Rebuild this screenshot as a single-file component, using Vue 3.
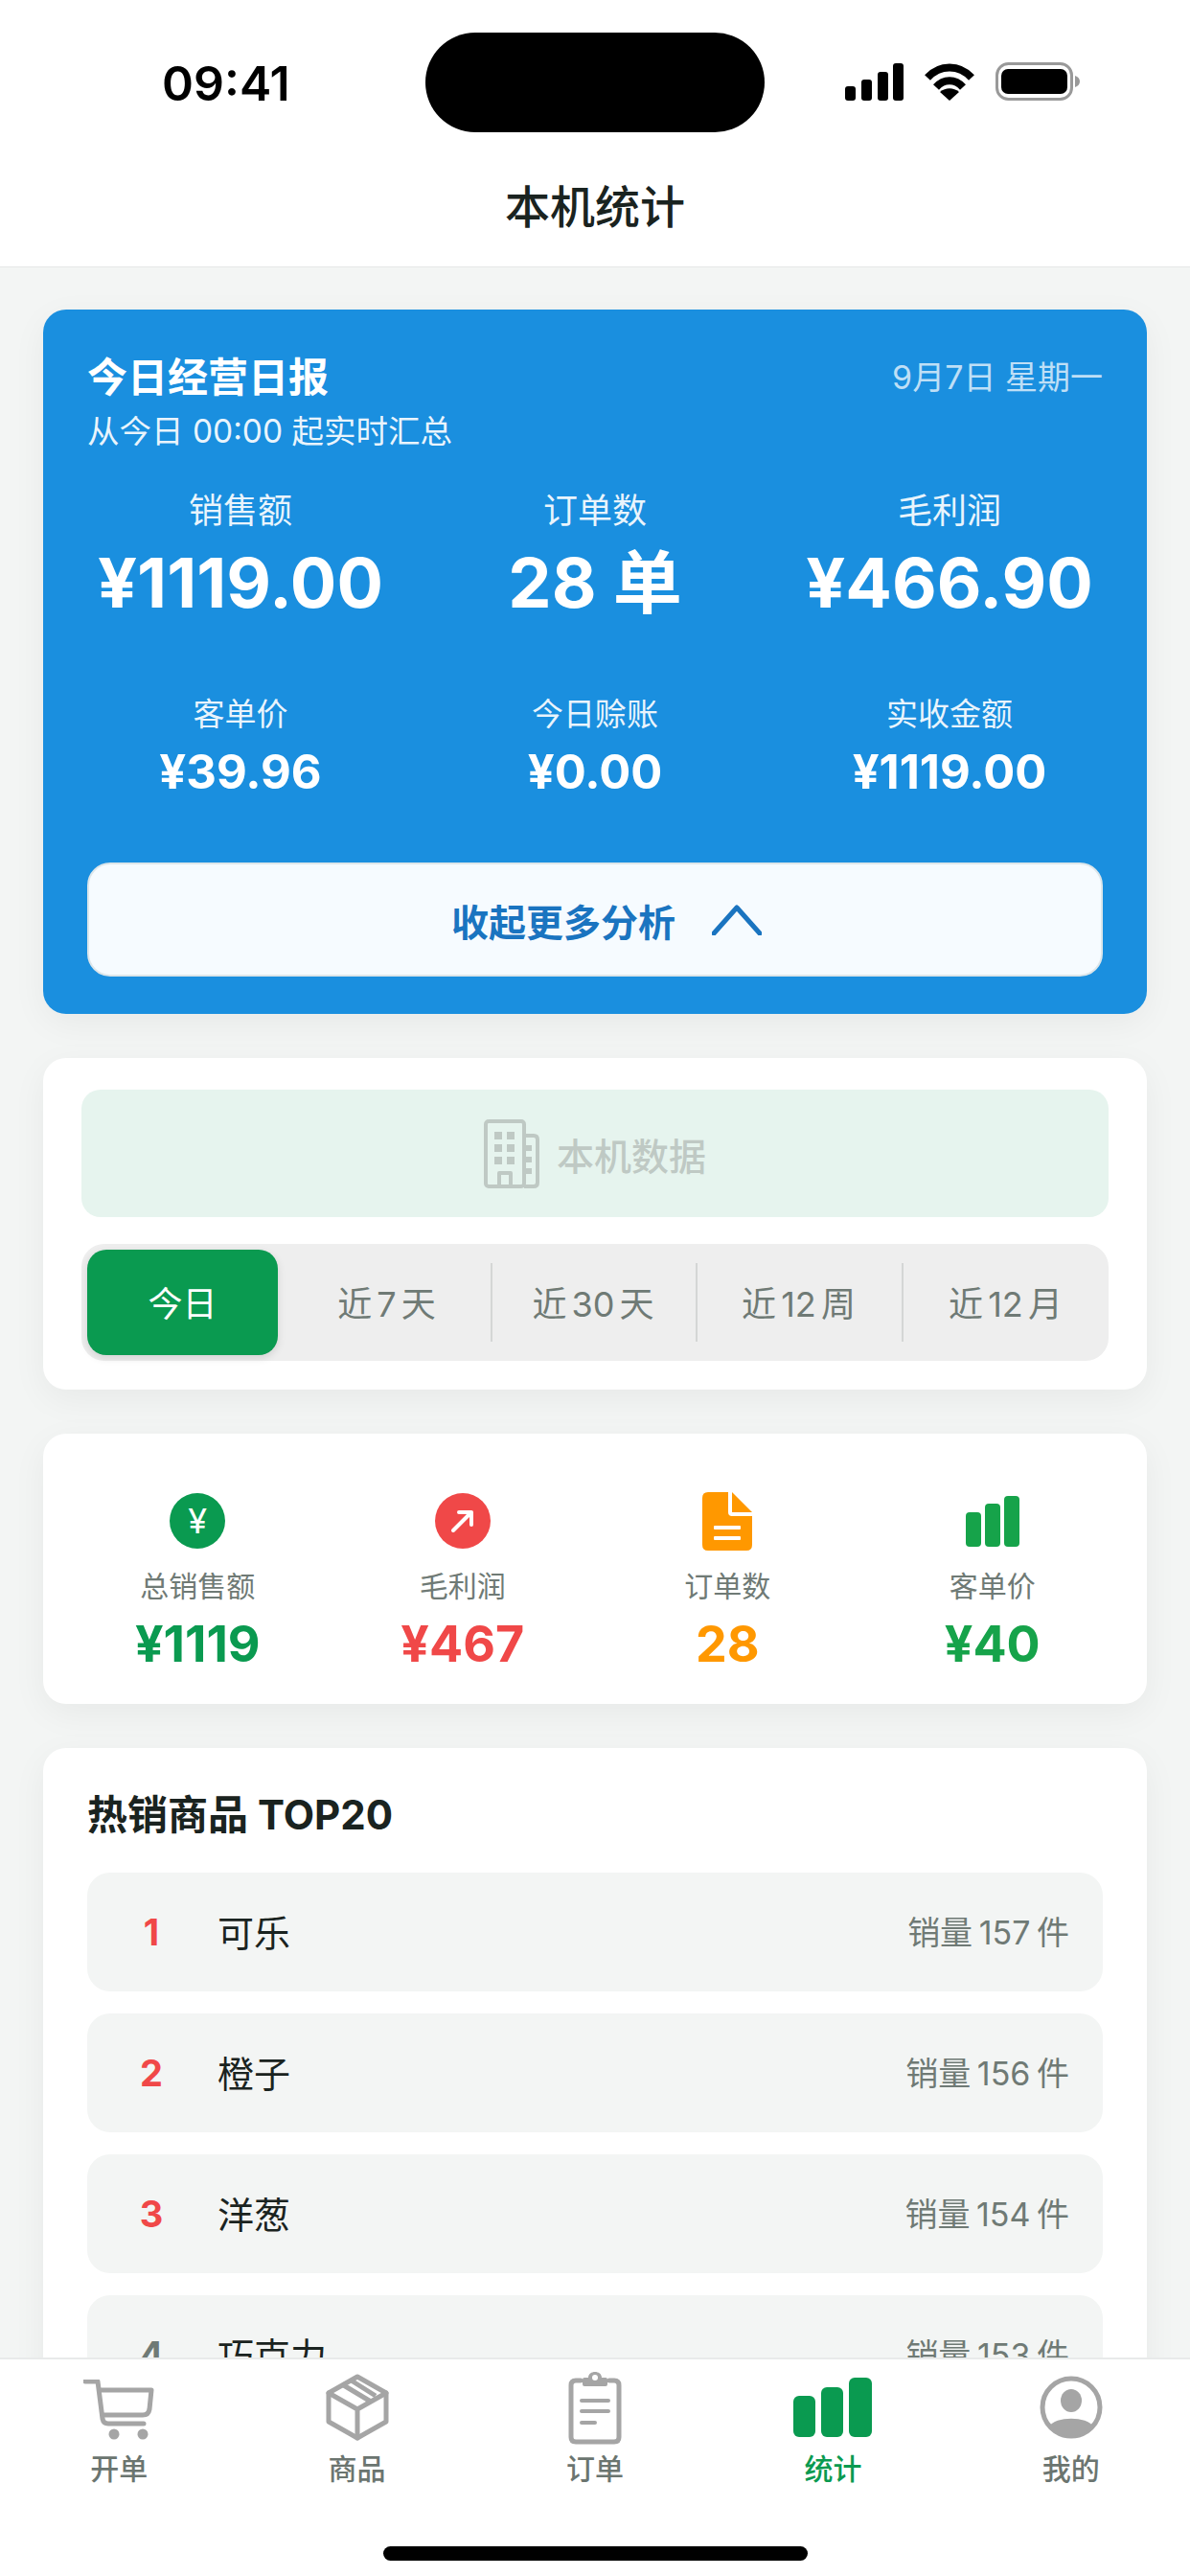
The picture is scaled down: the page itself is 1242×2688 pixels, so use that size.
<script setup>
const primary = [
  { label: '销售额', value: '¥1119.00' },
  { label: '订单数', value: '28 单' },
  { label: '毛利润', value: '¥466.90' },
]
const secondary = [
  { label: '客单价', value: '¥39.96' },
  { label: '今日赊账', value: '¥0.00' },
  { label: '实收金额', value: '¥1119.00' },
]
const ranges = ['今日', '近 7 天', '近 30 天', '近 12 周', '近 12 月']
const goods = [
  { rank: 1, name: '可乐', sold: '销量 157 件' },
  { rank: 2, name: '橙子', sold: '销量 156 件' },
  { rank: 3, name: '洋葱', sold: '销量 154 件' },
  { rank: 4, name: '巧克力', sold: '销量 153 件' },
]
</script>

<template>
  <div class="page">
    <header class="header">
      <div class="status">
        <span class="time">09:41</span>
        <div class="island"></div>
        <div class="status-icons">
          <svg class="signal" width="61" height="39" viewBox="0 0 61 39" fill="#000">
            <rect x="0" y="24" width="11" height="15" rx="3" />
            <rect x="17" y="17" width="11" height="22" rx="3" />
            <rect x="34" y="9" width="11" height="30" rx="3" />
            <rect x="50" y="0" width="11" height="39" rx="3" />
          </svg>
          <svg class="wifi" width="54" height="40" viewBox="0 0 54 40">
            <path d="M4 16 C17 2 37 2 50 16" fill="none" stroke="#000" stroke-width="8" />
            <path d="M13 26 C21 17 33 17 41 26" fill="none" stroke="#000" stroke-width="8" />
            <path d="M17 31 C23 26 31 26 37 31 L27 40 Z" fill="#000" />
          </svg>
          <svg class="battery" width="88" height="40" viewBox="0 0 88 40">
            <rect x="1.5" y="1.5" width="78" height="37" rx="12" fill="none" stroke="#999" stroke-width="3" />
            <rect x="6" y="7" width="69" height="26" rx="7" fill="#000" />
            <path d="M83 14 C86 15 88 17 88 20 C88 23 86 25 83 26 Z" fill="#999" />
          </svg>
        </div>
      </div>
      <h1 class="nav-title">本机统计</h1>
    </header>

    <main class="content">
      <section class="report">
        <div class="report-head">
          <div>
            <div class="report-title">今日经营日报</div>
            <div class="report-sub">从今日 00:00 起实时汇总</div>
          </div>
          <div class="report-date">9月7日 星期一</div>
        </div>
        <div class="metrics primary">
          <div v-for="m in primary" :key="m.label" class="metric">
            <div class="metric-label">{{ m.label }}</div>
            <div class="metric-value">{{ m.value }}</div>
          </div>
        </div>
        <div class="metrics secondary">
          <div v-for="m in secondary" :key="m.label" class="metric">
            <div class="metric-label">{{ m.label }}</div>
            <div class="metric-value">{{ m.value }}</div>
          </div>
        </div>
        <button class="collapse">
          <span>收起更多分析</span>
          <svg width="52" height="32" viewBox="0 0 52 32" fill="none" stroke="#1a74c0" stroke-width="5" stroke-linecap="round" stroke-linejoin="round">
            <path d="M2 30 L26 3 L50 30" />
          </svg>
        </button>
      </section>

      <section class="card filter">
        <div class="source">
          <svg width="58" height="72" viewBox="0 0 58 72" fill="none" stroke="#bfc9c4" stroke-width="4" stroke-linejoin="round">
            <rect x="2" y="2" width="40" height="68" rx="3" />
            <path d="M42 17 H52 Q56 17 56 21 V66 Q56 70 52 70 H42" />
            <path d="M16 70 V56 H28 V70" />
            <g fill="#bfc9c4" stroke="none">
              <rect x="11" y="13" width="8" height="8" /><rect x="24" y="13" width="8" height="8" />
              <rect x="11" y="26" width="8" height="8" /><rect x="24" y="26" width="8" height="8" />
              <rect x="11" y="39" width="8" height="8" /><rect x="24" y="39" width="8" height="8" />
              <rect x="44" y="27" width="6" height="6" /><rect x="44" y="39" width="6" height="6" /><rect x="44" y="51" width="6" height="6" />
            </g>
          </svg>
          <span>本机数据</span>
        </div>
        <div class="segments">
          <div v-for="(r, i) in ranges" :key="r" class="segment" :class="{ active: i === 0 }">{{ r }}</div>
        </div>
      </section>

      <section class="card stats">
        <div class="stat">
          <div class="stat-icon"><span class="dot green">¥</span></div>
          <div class="stat-label">总销售额</div>
          <div class="stat-value c-green">¥1119</div>
        </div>
        <div class="stat">
          <div class="stat-icon">
            <span class="dot red">
              <svg width="28" height="28" viewBox="0 0 28 28" fill="none" stroke="#fff" stroke-width="4" stroke-linecap="round" stroke-linejoin="round">
                <path d="M4 24 L23 5 M10 5 H23 V18" />
              </svg>
            </span>
          </div>
          <div class="stat-label">毛利润</div>
          <div class="stat-value c-red">¥467</div>
        </div>
        <div class="stat">
          <div class="stat-icon">
            <svg width="52" height="61" viewBox="0 0 52 61">
              <path d="M6 0 H27 V21 Q27 25 31 25 H52 V55 Q52 61 46 61 H6 Q0 61 0 55 V6 Q0 0 6 0 Z" fill="#ff9800" />
              <path d="M31 0 L52 21 H31 Z" fill="#ff9800" />
              <rect x="12" y="35" width="28" height="4" rx="1" fill="#fff" />
              <rect x="12" y="46" width="28" height="4" rx="1" fill="#fff" />
            </svg>
          </div>
          <div class="stat-label">订单数</div>
          <div class="stat-value c-orange">28</div>
        </div>
        <div class="stat">
          <div class="stat-icon">
            <svg width="56" height="53" viewBox="0 0 56 53" fill="#16a34a">
              <rect x="0" y="17" width="16" height="36" rx="4" />
              <rect x="20" y="8" width="16" height="45" rx="4" />
              <rect x="40" y="0" width="16" height="53" rx="4" />
            </svg>
          </div>
          <div class="stat-label">客单价</div>
          <div class="stat-value c-lime">¥40</div>
        </div>
      </section>

      <section class="card top">
        <h2 class="top-title">热销商品 TOP20</h2>
        <div class="top-list">
          <div v-for="g in goods" :key="g.rank" class="top-row">
            <span class="rank" :class="{ hot: g.rank <= 3 }">{{ g.rank }}</span>
            <span class="name">{{ g.name }}</span>
            <span class="sold">{{ g.sold }}</span>
          </div>
        </div>
      </section>
    </main>

    <nav class="tabbar">
      <div class="tabs">
        <div class="tab">
          <div class="tab-icon cart">
            <svg width="74" height="64" viewBox="0 0 74 64" fill="none" stroke="#a5a5a5" stroke-width="5" stroke-linecap="round" stroke-linejoin="round">
              <path d="M2 2 H15 L20 41 Q21 46 26 46 H63" />
              <path d="M17 11 H71 L69 31 Q68 37 62 37 H20" />
              <circle cx="32" cy="57" r="5.5" fill="#a5a5a5" stroke="none" />
              <circle cx="62" cy="57" r="5.5" fill="#a5a5a5" stroke="none" />
            </svg>
          </div>
          <span>开单</span>
        </div>
        <div class="tab">
          <div class="tab-icon">
            <svg width="66" height="70" viewBox="0 0 66 70" fill="none" stroke="#a5a5a5" stroke-width="5" stroke-linecap="round" stroke-linejoin="round">
              <path d="M33 3 L63 20 V50 L33 67 L3 50 V20 Z" />
              <path d="M3 20 L33 37 L63 20 M33 37 V67" />
              <path d="M17 11 L47 29 M25 6 L52 23" stroke-linecap="butt" />
            </svg>
          </div>
          <span>商品</span>
        </div>
        <div class="tab">
          <div class="tab-icon">
            <svg width="56" height="78" viewBox="0 0 56 78" fill="none" stroke="#a5a5a5" stroke-width="5" stroke-linecap="round" stroke-linejoin="round">
              <path d="M13 11 H8 Q3 11 3 16 V70 Q3 75 8 75 H48 Q53 75 53 70 V16 Q53 11 48 11 H43" />
              <path d="M17 17 H39 Q41 17 41 15 V10 Q41 8 39 8 H35 C35 0 21 0 21 8 H17 Q15 8 15 10 V15 Q15 17 17 17 Z" fill="#a5a5a5" stroke="none" />
              <circle cx="28" cy="8" r="3" fill="#fff" stroke="none" />
              <path d="M14 32 H42 M14 43 H42 M14 55 H28" stroke-width="4" />
            </svg>
          </div>
          <span>订单</span>
        </div>
        <div class="tab on">
          <div class="tab-icon">
            <svg width="82" height="62" viewBox="0 0 82 62" fill="#0a9a50">
              <rect x="0" y="19" width="23" height="43" rx="6" />
              <rect x="29" y="10" width="23" height="52" rx="6" />
              <rect x="58" y="0" width="24" height="62" rx="6" />
            </svg>
          </div>
          <span>统计</span>
        </div>
        <div class="tab">
          <div class="tab-icon">
            <svg width="66" height="66" viewBox="0 0 66 66">
              <defs>
                <clipPath id="ring"><circle cx="33" cy="33" r="30" /></clipPath>
              </defs>
              <circle cx="33" cy="33" r="30" fill="none" stroke="#a5a5a5" stroke-width="5" />
              <ellipse cx="33" cy="26" rx="11" ry="12" fill="#a5a5a5" />
              <path d="M10 53 C16 42 50 42 56 53 C48 70 18 70 10 53 Z" fill="#a5a5a5" clip-path="url(#ring)" />
            </svg>
          </div>
          <span>我的</span>
        </div>
      </div>
      <div class="home-indicator"></div>
    </nav>
  </div>
</template>

<style scoped>
.page {
  width: 1242px;
  height: 2688px;
  display: flex;
  flex-direction: column;
  overflow: hidden;
  background: #f3f5f4;
  font-family: Inter, "Noto Sans CJK SC", sans-serif;
  color: #1a2320;
}

.header {
  height: 279px;
  flex: none;
  background: #fff;
  border-bottom: 1px solid #e6e8e7;
  box-sizing: border-box;
}
.status {
  height: 138px;
  position: relative;
}
.time {
  position: absolute;
  left: 169px;
  top: 58px;
  font-size: 50px;
  line-height: 58px;
  font-weight: 600;
  color: #000;
}
.island {
  position: absolute;
  left: 444px;
  top: 34px;
  width: 354px;
  height: 104px;
  border-radius: 52px;
  background: #000;
}
.status-icons {
  position: absolute;
  left: 882px;
  top: 65px;
  width: 245px;
  height: 40px;
  display: flex;
  align-items: flex-start;
}
.signal { margin-top: 1px; }
.wifi { margin-left: 21px; }
.battery { margin-left: 21px; }
.nav-title {
  margin: 46px 0 0;
  text-align: center;
  font-size: 47px;
  line-height: 64px;
  font-weight: 500;
}

.content {
  flex: 1;
  min-height: 0;
  overflow: hidden;
  padding: 44px 45px 0;
  display: flex;
  flex-direction: column;
  gap: 46px;
}
.report, .card {
  flex: none;
  border-radius: 24px;
  box-shadow: 0 10px 36px rgba(0, 0, 0, 0.05);
}

.report {
  height: 735px;
  box-sizing: border-box;
  padding: 46px 46px 0;
  background: #1a8fdf;
  color: #fff;
}
.report-head {
  display: flex;
  justify-content: space-between;
  align-items: flex-start;
}
.report-title {
  font-size: 42px;
  line-height: 50px;
  font-weight: 700;
}
.report-sub {
  margin-top: 9px;
  font-size: 33.5px;
  line-height: 44px;
  color: rgba(255, 255, 255, 0.92);
}
.report-date {
  font-size: 34px;
  line-height: 50px;
  color: rgba(255, 255, 255, 0.72);
}
.metrics {
  display: grid;
  grid-template-columns: repeat(3, 1fr);
  margin: 0 -25px;
  text-align: center;
}
.metric-label { white-space: nowrap; }
.metric-value {
  white-space: nowrap;
  font-weight: 700;
}
.primary { margin-top: 36px; }
.primary .metric-label {
  font-size: 36px;
  line-height: 50px;
  color: rgba(255, 255, 255, 0.92);
}
.primary .metric-value {
  margin-top: 8px;
  font-size: 72px;
  line-height: 84px;
}
.secondary { margin-top: 72px; }
.secondary .metric-label {
  font-size: 33px;
  line-height: 46px;
  color: rgba(255, 255, 255, 0.92);
}
.secondary .metric-value {
  margin-top: 10px;
  font-size: 49px;
  line-height: 56px;
}
.collapse {
  width: 100%;
  height: 119px;
  margin-top: 66px;
  padding: 0 0 0 24px;
  box-sizing: border-box;
  display: flex;
  align-items: center;
  justify-content: center;
  gap: 38px;
  background: #f6fbff;
  border: 2px solid #dde6ea;
  border-radius: 24px;
  font-family: inherit;
  font-size: 39px;
  font-weight: 700;
  color: #1a74c0;
}

.card { background: #fff; }
.filter {
  height: 346px;
  box-sizing: border-box;
  padding: 33px 40px 0;
}
.source {
  height: 133px;
  display: flex;
  align-items: center;
  justify-content: center;
  gap: 18px;
  background: #e6f4ee;
  border-radius: 20px;
  font-size: 39px;
  font-weight: 500;
  color: #bfc9c4;
}
.segments {
  height: 122px;
  margin-top: 28px;
  box-sizing: border-box;
  padding: 6px;
  display: grid;
  grid-template-columns: 199px 222px 214px 215px 1fr;
  background: #eeeeee;
  border-radius: 24px;
}
.segment {
  position: relative;
  display: flex;
  align-items: center;
  justify-content: center;
  padding-bottom: 2px;
  font-size: 36px;
  color: #6f7a75;
  word-spacing: -5px;
}
.segment:nth-child(2) { padding-left: 5px; }
.segment:nth-child(5) { padding-left: 7px; }
.segment:nth-child(n + 3)::before {
  content: "";
  position: absolute;
  left: 0;
  top: 14px;
  bottom: 14px;
  width: 2px;
  background: #d4d6d5;
}
.segment.active {
  background: #0a9a50;
  border-radius: 20px;
  color: #fff;
  box-shadow: 0 3px 8px rgba(0, 0, 0, 0.12);
}

.stats {
  height: 282px;
  box-sizing: border-box;
  padding: 60px 23px 0;
  display: grid;
  grid-template-columns: repeat(4, 1fr);
  align-content: start;
}
.stat {
  display: flex;
  flex-direction: column;
  align-items: center;
}
.stat-icon {
  height: 62px;
  display: flex;
  align-items: center;
  justify-content: center;
}
.dot {
  width: 58px;
  height: 58px;
  border-radius: 50%;
  display: flex;
  align-items: center;
  justify-content: center;
  color: #fff;
  font-size: 36px;
}
.dot.green { background: #0a9a50; }
.dot.red { background: #f04848; }
.stat-label {
  margin-top: 16px;
  font-size: 30px;
  line-height: 42px;
  color: #6f7a75;
}
.stat-value {
  margin-top: 10px;
  font-size: 52px;
  line-height: 60px;
  font-weight: 700;
}
.c-green { color: #0a9a50; }
.c-red { color: #f04848; }
.c-orange { color: #ff9800; }
.c-lime { color: #16a34a; }

.top {
  box-sizing: border-box;
  padding: 44px 46px 46px;
}
.top-title {
  margin: 0;
  font-size: 42px;
  line-height: 52px;
  font-weight: 700;
}
.top-list {
  margin-top: 34px;
  display: flex;
  flex-direction: column;
  gap: 23px;
}
.top-row {
  height: 124px;
  display: flex;
  align-items: center;
  padding: 0 35px 0 0;
  background: #f3f5f4;
  border-radius: 24px;
}
.rank {
  width: 134px;
  text-align: center;
  font-size: 38px;
  font-weight: 700;
  color: #6f7a75;
}
.rank.hot { color: #f04848; }
.name {
  flex: 1;
  padding: 0 0 3px 2px;
  font-size: 38px;
  color: #1a2320;
}
.sold {
  padding-bottom: 3px;
  font-size: 34px;
  word-spacing: -3px;
  color: #6f7a75;
}

.tabbar {
  height: 228px;
  flex: none;
  box-sizing: border-box;
  position: relative;
  background: #fff;
  border-top: 2px solid #e8eaea;
}
.tabs {
  display: grid;
  grid-template-columns: repeat(5, 1fr);
}
.tab {
  padding-top: 10px;
  display: flex;
  flex-direction: column;
  align-items: center;
  font-size: 30px;
  line-height: 42px;
  font-weight: 500;
  color: #6b7570;
}
.tab-icon {
  height: 80px;
  margin-bottom: 3px;
  display: flex;
  align-items: center;
  justify-content: center;
}
.tab-icon.cart { padding-top: 5px; box-sizing: border-box; }
.tab.on { color: #0a9a50; }
.home-indicator {
  position: absolute;
  left: 400px;
  bottom: 16px;
  width: 443px;
  height: 15px;
  border-radius: 8px;
  background: #000;
}
</style>
